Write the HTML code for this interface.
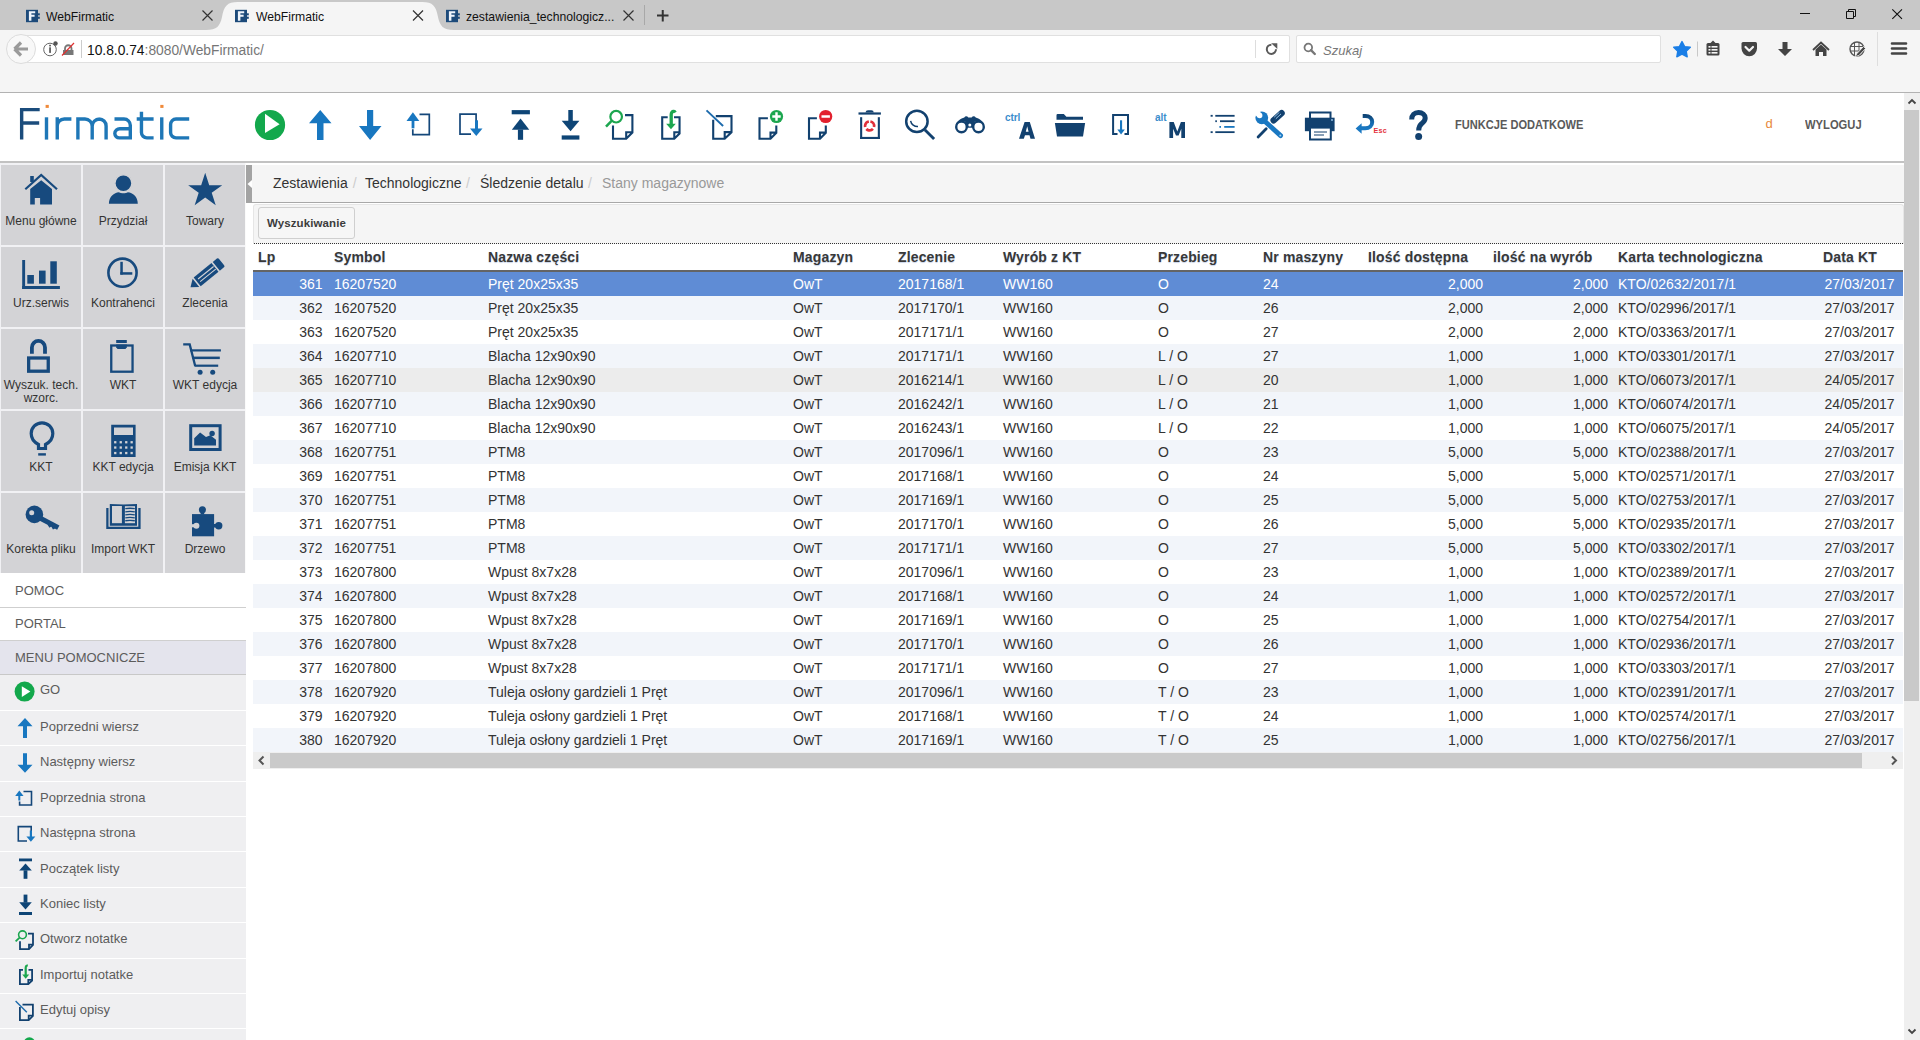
<!DOCTYPE html>
<html><head><meta charset="utf-8"><title>WebFirmatic</title>
<style>
*{box-sizing:border-box}
html,body{margin:0;padding:0;width:1920px;height:1040px;overflow:hidden;background:#fff;font-family:"Liberation Sans",sans-serif}
.a{position:absolute}
svg.i{position:absolute;overflow:visible}
#tabbar{left:0;top:0;width:1920px;height:30px;background:#c8c8c8}
#toolbar{left:0;top:30px;width:1920px;height:62px;background:#f5f5f5}
#tbline{left:0;top:92px;width:1920px;height:1px;background:#b2b2b2}
.tabt{position:absolute;font-size:13px;color:#111;top:8.5px;white-space:nowrap;line-height:16px}
#hdrline{left:0;top:161px;width:1904px;height:2px;background:#c2c2c2}
#side{left:0;top:163px;width:246px;height:877px;background:#efeff1}
.tile{position:absolute;width:80px;height:80px;background:#d3d3d6;text-align:center;font-size:12px;color:#333;line-height:13px}
.tile span{position:absolute;left:-5px;right:-5px;top:50px}
.mi{position:absolute;left:0;width:246px;background:#efeff1;font-size:13px;color:#555;line-height:15px}
.mi span{position:absolute;left:40px;top:9px;white-space:nowrap}
.th{position:absolute;top:249px;font-size:14px;font-weight:bold;color:#383838;line-height:16px;white-space:nowrap;text-shadow:0 1px 1px #c8d4ea;letter-spacing:0.15px}
.row{position:absolute;left:253px;width:1650px;height:24px;font-size:14px;color:#333;background:#fff;line-height:16px}
.row span{position:absolute;top:4px;white-space:nowrap}
.row.alt{background:#f2f5fa}
.row.hov{background:#ececec}
.row.sel{background:#5f8cd5;color:#fff}

</style></head><body>
<div class="a" id="tabbar"></div>
<!-- active tab shape -->
<svg class="i" style="left:0;top:0" width="1920" height="30">
<path d="M206 30 C217 30 220 26 222 17 C224 6 227 2 238 2 L422 2 C433 2 436 6 438 17 C440 26 443 30 454 30 Z" fill="#f5f5f5"/>
</svg>
<!-- favicons -->
<svg class="i" style="left:26px;top:9px" width="15" height="15"><rect x="0" y="0.8" width="12" height="12.4" fill="#1c4a7a"/><rect x="12" y="4.3" width="1.8" height="2" fill="#1c4a7a"/><rect x="12" y="7.7" width="1.8" height="2.1" fill="#1c4a7a"/><path d="M2.9 2.25 H9.2 V4.2 H5.4 V5.7 H8.6 V7.7 H5.4 V11.8 H2.9 Z" fill="#eef4fb"/></svg>
<svg class="i" style="left:235px;top:9px" width="15" height="15"><rect x="0" y="0.8" width="12" height="12.4" fill="#1c4a7a"/><rect x="12" y="4.3" width="1.8" height="2" fill="#1c4a7a"/><rect x="12" y="7.7" width="1.8" height="2.1" fill="#1c4a7a"/><path d="M2.9 2.25 H9.2 V4.2 H5.4 V5.7 H8.6 V7.7 H5.4 V11.8 H2.9 Z" fill="#eef4fb"/></svg>
<svg class="i" style="left:446px;top:9px" width="15" height="15"><rect x="0" y="0.8" width="12" height="12.4" fill="#1c4a7a"/><rect x="12" y="4.3" width="1.8" height="2" fill="#1c4a7a"/><rect x="12" y="7.7" width="1.8" height="2.1" fill="#1c4a7a"/><path d="M2.9 2.25 H9.2 V4.2 H5.4 V5.7 H8.6 V7.7 H5.4 V11.8 H2.9 Z" fill="#eef4fb"/></svg>
<div class="tabt" style="left:46px;font-size:12.2px">WebFirmatic</div>
<div class="tabt" style="left:256px;font-size:12.2px">WebFirmatic</div>
<div class="tabt" style="left:466px;font-size:12.2px">zestawienia_technologicz...</div>
<!-- tab close X -->
<svg class="i" style="left:0;top:0" width="1920" height="30">
<g stroke="#333" stroke-width="1.2" fill="none">
<path d="M202.5 10.5 L212.5 20.5 M212.5 10.5 L202.5 20.5"/>
<path d="M413 10.5 L423 20.5 M423 10.5 L413 20.5"/>
<path d="M623.5 10.5 L633.5 20.5 M633.5 10.5 L623.5 20.5"/>
</g>
<path d="M644.5 5 V25" stroke="#a8a8a8" stroke-width="1"/>
<path d="M657 15.5 H668.5 M662.75 10 V21.5" stroke="#333" stroke-width="2"/>
<!-- window controls -->
<path d="M1800 13.5 H1810" stroke="#111" stroke-width="1"/>
<path d="M1846.5 11.5 H1853.5 V18.5 H1846.5 Z M1848.5 11.5 V9.5 H1855.5 V16.5 H1853.5" stroke="#111" stroke-width="1" fill="none"/>
<path d="M1892.3 9.3 L1902 18.9 M1902 9.3 L1892.3 18.9" stroke="#111" stroke-width="1.1"/>
</svg>

<div class="a" id="toolbar"></div>
<!-- url bar -->
<div class="a" style="left:22px;top:35px;width:1268px;height:28px;background:#fff;border:1px solid #e0e0e0;border-radius:2px"></div>
<div class="a" style="left:6px;top:34px;width:30px;height:30px;border-radius:50%;background:#f8f8f8;border:1px solid #dcdcdc"></div>
<svg class="i" style="left:0;top:29px" width="1920" height="63">
<!-- back arrow -->
<path d="M14.5 20 L21 13.5 M14.5 20 L21 26.5 M15 20 H28" stroke="#9a9a9a" stroke-width="3.2" fill="none" stroke-linejoin="miter"/>
<!-- info icon -->
<circle cx="50" cy="20.5" r="6.3" fill="none" stroke="#666" stroke-width="1"/>
<rect x="49.2" y="18.3" width="1.7" height="5.6" fill="#555"/><rect x="49.2" y="15.8" width="1.7" height="1.6" fill="#555"/>
<circle cx="55.5" cy="14.5" r="2.2" fill="#555"/>
<!-- lock with slash -->
<path d="M63 26 V21 H73.5 V26 Z" fill="#777"/>
<path d="M65 21 V19.5 A3.2 3.2 0 0 1 71.5 19.5 V21" fill="none" stroke="#777" stroke-width="1.8"/>
<path d="M62 26.5 L74 14" stroke="#e03030" stroke-width="1.2"/>
<path d="M81.5 11 V29" stroke="#ccc" stroke-width="1"/>
<!-- reload -->
<path d="M1255.5 11 V29" stroke="#ddd" stroke-width="1"/>
<path d="M1271.4 15.7 A4.6 4.6 0 1 0 1276 20.3" fill="none" stroke="#5a5a5a" stroke-width="2"/>
<path d="M1271.2 14.3 H1277.3 V20.1 Z" fill="#5a5a5a"/>
</svg>
<div class="a" style="left:87px;top:42.5px;font-size:13.8px;line-height:16px;color:#111;white-space:nowrap">10.8.0.74<span style="color:#767676">:8080/WebFirmatic/</span></div>
<!-- search -->
<div class="a" style="left:1296px;top:35px;width:365px;height:28px;background:#fff;border:1px solid #e0e0e0;border-radius:2px"></div>
<svg class="i" style="left:1300px;top:40px" width="20" height="20"><circle cx="8.3" cy="7.5" r="3.8" fill="none" stroke="#777" stroke-width="1.8"/><path d="M11 10.2 L14.8 14" stroke="#777" stroke-width="2.4" stroke-linecap="round"/></svg>
<div class="a" style="left:1323px;top:42.5px;font-size:13px;line-height:16px;color:#777;font-style:italic">Szukaj</div>
<svg class="i" style="left:0;top:29px" width="1920" height="63">
<!-- star -->
<path d="M1682 12.5 L1684.6 17.6 L1690.3 18.3 L1686.2 22.2 L1687.2 27.8 L1682 25.1 L1676.8 27.8 L1677.8 22.2 L1673.7 18.3 L1679.4 17.6 Z" fill="#1a7ee6" stroke="#1a7ee6" stroke-width="1.4" stroke-linejoin="round"/>
<path d="M1697.5 12.5 V27.5" stroke="#c8c8c8" stroke-width="1"/>
<!-- reading list -->
<rect x="1706.5" y="14" width="13" height="12.5" rx="1.5" fill="#444"/>
<path d="M1710.5 14 L1713 11.5 L1715.5 14 Z" fill="#444"/>
<rect x="1708.5" y="17" width="2" height="1.6" fill="#f5f5f5"/><rect x="1711.5" y="17" width="6" height="1.6" fill="#f5f5f5"/>
<rect x="1708.5" y="20" width="2" height="1.6" fill="#f5f5f5"/><rect x="1711.5" y="20" width="6" height="1.6" fill="#f5f5f5"/>
<rect x="1708.5" y="23" width="2" height="1.6" fill="#f5f5f5"/><rect x="1711.5" y="23" width="6" height="1.6" fill="#f5f5f5"/>
<!-- pocket -->
<path d="M1741.5 14.5 Q1741.5 13 1743 13 H1755.5 Q1757 13 1757 14.5 V19.5 A7.75 7.75 0 0 1 1741.5 19.5 Z" fill="#444"/>
<path d="M1745.5 18 L1749.25 21.7 L1753 18" stroke="#f5f5f5" stroke-width="2.2" fill="none" stroke-linecap="round" stroke-linejoin="round"/>
<!-- download -->
<path d="M1782.5 13 H1787.5 V20 H1792 L1785 27 L1778 20 H1782.5 Z" fill="#444"/>
<!-- home -->
<path d="M1813 21 L1821 13.5 L1829 21" stroke="#444" stroke-width="1.8" fill="none"/>
<path d="M1815.5 20.5 L1821 15.5 L1826.5 20.5 V27 H1823 V23 H1819 V27 H1815.5 Z" fill="#444"/>
<!-- globe pencil -->
<circle cx="1857" cy="20" r="7" fill="none" stroke="#555" stroke-width="1.4"/>
<path d="M1850.5 17.5 H1863.5 M1850.5 22 H1860 M1854.5 13.5 V26.5 M1859 13.5 V22" stroke="#555" stroke-width="1"/>
<path d="M1855 27.5 L1857 24.5 L1863.5 17.5 L1865.5 19.5 L1859 26.5 Z" fill="#444" stroke="#f5f5f5" stroke-width="0.8"/>
<path d="M1877.5 3 V37" stroke="#dedede" stroke-width="1"/>
<!-- hamburger -->
<path d="M1892 14.5 H1906 M1892 19.5 H1906 M1892 24.5 H1906" stroke="#444" stroke-width="2.6" stroke-linecap="round"/>
</svg>
<div class="a" id="tbline"></div>
<div class="a" id="hdrline"></div>
<svg class="i" style="left:0;top:0;pointer-events:none" width="1920" height="170">
<!-- LOGO -->
<g fill="none" stroke-linecap="butt" stroke-width="3.4">
<path d="M21.65 139.6 V109.6 H39.7 M21.65 123 H39.2" stroke="#1b4c7c"/>
<g stroke="#1e77b7">
<path d="M46.5 117.3 V139.6"/>
<path d="M57.25 117.3 V139.6 M57.25 126 A7 7 0 0 1 64.25 119 H71.4"/>
<path d="M77.9 117.3 V139.6 M77.9 119 H85 A7.2 7.2 0 0 1 92.2 126.2 V139.6 M92.2 126.2 A7.2 7.2 0 0 1 99.4 119 H99.1 A6.9 6.9 0 0 1 106.1 126 V139.6"/>
<path d="M114.5 119 H124 A6.3 6.3 0 0 1 130.3 125.3 V139.6 M130.3 128.7 H120 A5 5 0 0 0 114.8 133.5 A4.5 4.5 0 0 0 119.5 137.9 H130.3"/>
<path d="M141.45 111.8 V132.5 A5.4 5.4 0 0 0 146.85 137.9 H153.6 M136.7 119 H153.6"/>
<path d="M161.75 117.3 V139.6"/>
<path d="M189.2 119 H176 A5.4 5.4 0 0 0 170.6 124.4 V132.5 A5.4 5.4 0 0 0 176 137.9 H189.2"/>
</g>
</g>
<rect x="45.6" y="104.9" width="3.2" height="3" fill="#f08a3a"/>
<rect x="160.3" y="104.9" width="3.2" height="3" fill="#f08a3a"/>

<!-- 1 GO -->
<circle cx="270" cy="125" r="15.1" fill="#13a84c"/>
<path d="M265 113.8 L279.6 124.2 L265 132.9 Z" fill="#fff"/>
<!-- 2 up -->
<path d="M320.25 110 L331.5 123.2 H323.5 V140 H317 V123.2 H309 Z" fill="#1877c0"/>
<!-- 3 down -->
<path d="M367 110 H373.2 V126 H381.5 L370.1 140 L359 126 H367 Z" fill="#1877c0"/>
<!-- 4 prev page -->
<path d="M419.5 114.3 H429.3 V134.7 H412.8 V129.3" fill="none" stroke="#14477a" stroke-width="1.7"/>
<path d="M412.9 112.3 L419.3 120.9 H406.5 Z" fill="#1877c0"/><rect x="411.6" y="120.5" width="2.8" height="7.8" fill="#1877c0"/>
<!-- 5 next page -->
<path d="M476.1 127.5 V114.1 H460 V134.1 H471" fill="none" stroke="#14477a" stroke-width="1.7"/>
<rect x="475" y="120.3" width="3" height="8.8" fill="#1877c0"/><path d="M470 128.6 H482.5 L476.25 135.9 Z" fill="#1877c0"/>
<!-- 6 top of list -->
<g fill="#0e4576">
<rect x="511.7" y="110.1" width="18.2" height="4.2"/>
<path d="M520.55 118.6 L529.3 129.8 H511.8 Z"/><rect x="517.9" y="129.5" width="5.2" height="10.3"/>
<!-- 7 end of list -->
<rect x="568.3" y="110" width="4.5" height="11"/><path d="M561.7 120.8 H579.4 L570.55 131.3 Z"/><rect x="561.7" y="135.4" width="17.7" height="4.2"/>
</g>
<!-- page icons -->
<g fill="none" stroke="#12416f" stroke-width="2.1">
<path d="M613 125.4 V138.75 H626.2 L632.4 132.5 V115.1 H625 M626.2 138.5 V132.3 H632"/>
<path d="M667.7 117.2 H662.2 V138.75 H674.3 L679.55 133.5 V117.2 H674 M674.3 138.5 V132.3 H679.3"/>
<path d="M713.2 119.8 V138.75 H724.7 L731.5 132.2 V116.1 H715.8 M724.7 138.5 V132.1 H731.3"/>
<path d="M767.9 118.2 H759.5 V138.75 H770.5 L776.3 132.8 V125.5 M770.5 138.5 V132.6 H776.1"/>
<path d="M816.9 118.2 H809 V138.75 H820 L825.8 132.8 V125.5 M820 138.5 V132.6 H825.6"/>
</g>
<!-- magnifier green on page 8 -->
<circle cx="616.15" cy="116.7" r="5.8" fill="none" stroke="#1ca64f" stroke-width="2.2"/>
<path d="M611.6 120.8 L606 126.6" stroke="#1ca64f" stroke-width="2.5"/>
<!-- import arrow green -->
<path d="M671.2 124.5 V114.8 C671.2 112.5 672.3 111.2 673.8 111.4 C674.6 111.5 675 112 675.3 112.5" fill="none" stroke="#1ca64f" stroke-width="3.3"/>
<path d="M666.15 123.85 H675.8 L671 129.2 Z" fill="#1ca64f"/>
<!-- edit line -->
<path d="M706.5 110.4 L723.1 126" stroke="#1c6aac" stroke-width="1.9"/>
<!-- add -->
<circle cx="776.5" cy="116.5" r="6.6" fill="#1ca64f"/>
<path d="M772.3 116.5 H780.7 M776.5 112.3 V120.7" stroke="#fff" stroke-width="2.4"/>
<!-- remove -->
<circle cx="825.7" cy="116.5" r="6.6" fill="#e2212e"/>
<path d="M821.5 116.5 H829.9" stroke="#fff" stroke-width="2.5"/>
<!-- 13 trash -->
<g fill="#12416f">
<rect x="858.5" y="112.4" width="22.4" height="2.2"/>
<path d="M865.5 112.5 Q865.8 110.3 868 110.3 H871.4 Q873.6 110.3 873.8 112.5 Z"/>
<rect x="860.1" y="117.2" width="2.1" height="21.8"/>
<rect x="877.8" y="117.2" width="2.1" height="21.8"/>
<rect x="860.1" y="136.9" width="19.8" height="2.1"/>
</g>
<circle cx="869.6" cy="125.9" r="4.5" fill="none" stroke="#e0303a" stroke-width="2.7" stroke-dasharray="7.2 2.2" transform="rotate(-80 869.6 125.9)"/>
<!-- 14 magnifier -->
<circle cx="916.9" cy="121.4" r="10.7" fill="none" stroke="#12416f" stroke-width="2.5"/>
<path d="M910.6 120.8 A7 7 0 0 0 918 126.6" fill="none" stroke="#12416f" stroke-width="1.5"/>
<path d="M924.8 129.8 L934.1 139" stroke="#12416f" stroke-width="2.9"/>
<!-- 15 binoculars -->
<circle cx="961.5" cy="126.9" r="5.3" fill="none" stroke="#12416f" stroke-width="2.4"/>
<circle cx="978.5" cy="126.9" r="5.3" fill="none" stroke="#12416f" stroke-width="2.4"/>
<path d="M955.6 125.5 C956.5 121 961 118.5 964.3 117.4 C965.2 116 967.3 116 968.3 117.4 H971.6 C972.6 116 974.8 116 975.7 117.4 C979 118.5 983.5 121 984.4 125.5 L980 121.8 H960 Z" fill="#12416f"/>
<path d="M965 120 H975 L973.5 127.7 H966.5 Z" fill="#12416f"/>
<circle cx="969.8" cy="125" r="1.5" fill="#fff"/>
</svg>
<div class="a" style="left:1005px;top:113px;font-size:10px;font-weight:bold;color:#3a8dcc;line-height:10px;letter-spacing:-0.1px">ctrl</div>
<svg class="i" style="left:0;top:0" width="1920" height="170"><path d="M1019 138.8 L1024.6 121.9 H1029.8 L1035 138.8 H1030.5 L1029.5 135.3 H1025 L1023.8 138.8 Z M1025.8 131.8 H1028.6 L1027.2 126.3 Z" fill="#12416f" fill-rule="evenodd"/></svg>
<div class="a" style="left:1155px;top:113px;font-size:10px;font-weight:bold;color:#3a8dcc;line-height:10px;letter-spacing:-0.1px">alt</div>
<svg class="i" style="left:0;top:0" width="1920" height="170"><path d="M1169.4 137.9 V121.9 H1173.7 L1177.3 131.5 L1180.9 121.9 H1185 V137.9 H1181.3 V128.8 L1178.6 135.6 H1176 L1173.1 128.8 V137.9 Z" fill="#12416f"/></svg>
<svg class="i" style="left:0;top:0;pointer-events:none" width="1920" height="170">
<!-- 17 folder -->
<path d="M1056.5 119.8 V115.2 Q1056.5 114.1 1057.6 114.1 H1063.8 L1066.4 116.7 H1083 V119.8 Z" fill="#12416f"/>
<path d="M1054.9 122.9 H1085.1 L1083 136.5 H1057 Z" fill="#12416f"/>
<!-- 18 download -->
<path d="M1117.5 134 H1113.1 V115 H1128 V134 H1124.5" fill="none" stroke="#12416f" stroke-width="2"/>
<rect x="1120" y="120.3" width="2.1" height="9.7" fill="#1877c0"/>
<path d="M1117.3 129.6 H1124.8 L1121.05 134.6 Z" fill="#1877c0"/>
<!-- 20 list -->
<g fill="#12416f">
<rect x="1210.6" y="114.9" width="2.1" height="1.8"/><rect x="1215.3" y="114.9" width="19.3" height="1.8"/>
<rect x="1215.3" y="120.3" width="1.6" height="1.8"/><rect x="1220" y="120.3" width="14.6" height="1.8"/>
<rect x="1210.6" y="131.25" width="2.1" height="1.8"/><rect x="1215.3" y="131.25" width="19.3" height="1.8"/>
</g>
<g fill="#1877c0"><rect x="1219.4" y="126" width="1.6" height="1.8"/><rect x="1224.2" y="126" width="10.4" height="1.8"/></g>
<!-- 21 tools -->
<path d="M1273.6 120.4 L1281.6 113.2" stroke="#12416f" stroke-width="6.3" stroke-linecap="round"/>
<path d="M1266.2 128.8 L1258.1 137" stroke="#12416f" stroke-width="2.8" stroke-linecap="round"/>
<path d="M1274.2 117.2 L1279.4 112.3 M1275.8 118.8 L1281 113.9" stroke="#a9d2f2" stroke-width="0.9"/>
<path d="M1265 121.5 L1280.6 135.6" stroke="#1a78c2" stroke-width="4.8" stroke-linecap="round"/>
<circle cx="1261.8" cy="117.8" r="6.4" fill="#1a78c2"/>
<circle cx="1259.7" cy="115.5" r="2.7" fill="#fff"/>
<rect x="-2.7" y="-10" width="5.4" height="10" transform="translate(1259.7 115.5) rotate(-45)" fill="#fff"/>
<circle cx="1280.3" cy="135.4" r="1" fill="#9fd0f5"/>
<!-- 22 printer -->
<rect x="1310" y="112.5" width="20.5" height="6.5" fill="none" stroke="#12416f" stroke-width="2"/>
<rect x="1304.9" y="117.7" width="29.7" height="13.5" fill="#12416f"/>
<circle cx="1332" cy="120" r="0.9" fill="#9cc8ee"/>
<rect x="1309.9" y="127.4" width="21" height="12.2" fill="#fff"/>
<rect x="1310" y="127.6" width="20.8" height="11.9" fill="none" stroke="#12416f" stroke-width="2"/>
<path d="M1314 132 H1327 M1314 135 H1324" stroke="#12416f" stroke-width="1.1"/>
<!-- 23 esc back -->
<defs><linearGradient id="eg" x1="0" y1="0" x2="0" y2="1"><stop offset="0" stop-color="#0f4576"/><stop offset="0.45" stop-color="#1466a8"/><stop offset="1" stop-color="#1a78c2"/></linearGradient></defs>
<path d="M1362.7 116 H1365.5 C1369.5 116 1372.2 118.6 1372.2 122 C1372.2 125.6 1369.3 128.3 1365.3 128.3 H1360.5" fill="none" stroke="url(#eg)" stroke-width="4" gradientUnits="userSpaceOnUse"/>
<path d="M1355.6 128.5 L1361.6 123.3 V133.8 Z" fill="#1a78c2"/>
<!-- 24 question -->
<path d="M1411.7 119.4 C1411.7 115 1414.5 112.5 1418.5 112.5 C1422.5 112.5 1425.2 114.8 1425.2 118 C1425.2 121 1423.3 122.4 1421.5 123.8 C1419.8 125.2 1418.7 126.5 1418.7 130.6" fill="none" stroke="#12416f" stroke-width="5"/>
<circle cx="1418.65" cy="136.5" r="3.5" fill="#12416f"/>
</svg>
<div class="a" style="left:1373.5px;top:127px;font-size:7.2px;font-weight:bold;color:#e3323c;line-height:8px;letter-spacing:0.2px">Esc</div>
<div class="a" style="left:1455px;top:117px;font-size:13.2px;font-weight:bold;color:#5a5a5a;line-height:16px;white-space:nowrap;transform:scaleX(0.84);transform-origin:0 0">FUNKCJE DODATKOWE</div>
<div class="a" style="left:1765.5px;top:116px;font-size:13px;color:#e8893a;line-height:16px">d</div>
<div class="a" style="left:1805px;top:116.5px;font-size:13.2px;font-weight:bold;color:#5a5a5a;line-height:16px;white-space:nowrap;transform:scaleX(0.85);transform-origin:0 0">WYLOGUJ</div>
<div class="a" id="side"></div>
<div class="a" style="left:0;top:163px;width:246px;height:410px;background:#f1f1f4"></div>
<div class="tile" style="left:1px;top:165px"><span>Menu główne</span></div>
<div class="tile" style="left:83px;top:165px"><span>Przydział</span></div>
<div class="tile" style="left:165px;top:165px"><span>Towary</span></div>
<div class="tile" style="left:1px;top:247px"><span>Urz.serwis</span></div>
<div class="tile" style="left:83px;top:247px"><span>Kontrahenci</span></div>
<div class="tile" style="left:165px;top:247px"><span>Zlecenia</span></div>
<div class="tile" style="left:1px;top:329px"><span>Wyszuk. tech.<br>wzorc.</span></div>
<div class="tile" style="left:83px;top:329px"><span>WKT</span></div>
<div class="tile" style="left:165px;top:329px"><span>WKT edycja</span></div>
<div class="tile" style="left:1px;top:411px"><span>KKT</span></div>
<div class="tile" style="left:83px;top:411px"><span>KKT edycja</span></div>
<div class="tile" style="left:165px;top:411px"><span>Emisja KKT</span></div>
<div class="tile" style="left:1px;top:493px"><span>Korekta pliku</span></div>
<div class="tile" style="left:83px;top:493px"><span>Import WKT</span></div>
<div class="tile" style="left:165px;top:493px"><span>Drzewo</span></div>
<div class="a" style="left:245px;top:163px;width:1px;height:410px;background:#fafafa"></div>
<div class="a" style="left:0;top:573px;width:246px;height:35px;background:#fff;border-bottom:1px solid #cfcfcf"></div>
<div class="a" style="left:0;top:608px;width:246px;height:33px;background:#fff;border-bottom:1px solid #cfcfcf"></div>
<div class="a" style="left:0;top:641px;width:246px;height:34px;background:#e4e4ed;border-bottom:1px solid #c8c8c8"></div>
<div class="a" style="left:15px;top:583px;font-size:13px;line-height:15px;color:#5c5c5c;white-space:nowrap">POMOC</div>
<div class="a" style="left:15px;top:616px;font-size:13px;line-height:15px;color:#5c5c5c;white-space:nowrap">PORTAL</div>
<div class="a" style="left:15px;top:650px;font-size:13px;line-height:15px;color:#5c5c5c;white-space:nowrap">MENU POMOCNICZE</div>
<div class="a" style="left:40px;top:682.10px;font-size:13px;line-height:15px;color:#5c5c5c;white-space:nowrap">GO</div>
<div class="a" style="left:0;top:709.70px;width:246px;height:1px;background:#fff"></div>
<div class="a" style="left:40px;top:718.90px;font-size:13px;line-height:15px;color:#5c5c5c;white-space:nowrap">Poprzedni wiersz</div>
<div class="a" style="left:0;top:745.10px;width:246px;height:1px;background:#fff"></div>
<div class="a" style="left:40px;top:754.30px;font-size:13px;line-height:15px;color:#5c5c5c;white-space:nowrap">Następny wiersz</div>
<div class="a" style="left:0;top:780.50px;width:246px;height:1px;background:#fff"></div>
<div class="a" style="left:40px;top:789.70px;font-size:13px;line-height:15px;color:#5c5c5c;white-space:nowrap">Poprzednia strona</div>
<div class="a" style="left:0;top:815.90px;width:246px;height:1px;background:#fff"></div>
<div class="a" style="left:40px;top:825.10px;font-size:13px;line-height:15px;color:#5c5c5c;white-space:nowrap">Następna strona</div>
<div class="a" style="left:0;top:851.30px;width:246px;height:1px;background:#fff"></div>
<div class="a" style="left:40px;top:860.50px;font-size:13px;line-height:15px;color:#5c5c5c;white-space:nowrap">Początek listy</div>
<div class="a" style="left:0;top:886.70px;width:246px;height:1px;background:#fff"></div>
<div class="a" style="left:40px;top:895.90px;font-size:13px;line-height:15px;color:#5c5c5c;white-space:nowrap">Koniec listy</div>
<div class="a" style="left:0;top:922.10px;width:246px;height:1px;background:#fff"></div>
<div class="a" style="left:40px;top:931.30px;font-size:13px;line-height:15px;color:#5c5c5c;white-space:nowrap">Otworz notatke</div>
<div class="a" style="left:0;top:957.50px;width:246px;height:1px;background:#fff"></div>
<div class="a" style="left:40px;top:966.70px;font-size:13px;line-height:15px;color:#5c5c5c;white-space:nowrap">Importuj notatke</div>
<div class="a" style="left:0;top:992.90px;width:246px;height:1px;background:#fff"></div>
<div class="a" style="left:40px;top:1002.10px;font-size:13px;line-height:15px;color:#5c5c5c;white-space:nowrap">Edytuj opisy</div>
<div class="a" style="left:0;top:1028.30px;width:246px;height:1px;background:#fff"></div>
<div class="a" style="left:40px;top:1037.50px;font-size:13px;line-height:15px;color:#5c5c5c;white-space:nowrap">Dodaj notatke</div>
<svg class="i" style="left:0;top:0;pointer-events:none" width="250" height="1040">
<g fill="#174a7e">
<!-- home -->
<rect x="30.2" y="176" width="3.6" height="6"/>
<path d="M25.3 189.2 L41.2 175 L57 189.2" fill="none" stroke="#174a7e" stroke-width="2.2"/>
<path d="M30.2 189 L41.2 180.2 L52 189 V204.4 H40.1 V198 H34.8 V204.4 H30.2 Z"/>
<!-- person -->
<circle cx="123.4" cy="183.3" r="8.5" stroke="#d3d3d6" stroke-width="1.4"/>
<path d="M108.9 203.8 C109 196.5 114 192.6 119 192.2 C121 193.6 125.8 193.6 127.8 192.2 C132.8 192.6 137.8 196.5 137.8 203.8 Z"/>
<!-- star -->
<path d="M205.20 172.80 L209.22 185.17 L222.22 185.17 L211.70 192.81 L215.72 205.18 L205.20 197.54 L194.68 205.18 L198.70 192.81 L188.18 185.17 L201.18 185.17 Z"/>
<!-- bars -->
<rect x="22.2" y="260" width="2.9" height="29"/><rect x="22.2" y="286" width="37.7" height="3"/>
<rect x="27.3" y="275" width="6.6" height="8.7"/><rect x="39" y="270.6" width="6.6" height="13.1"/><rect x="50.3" y="261.3" width="6.5" height="22.4"/>
<!-- clock -->
<circle cx="122.5" cy="272.7" r="14.1" fill="none" stroke="#174a7e" stroke-width="2.6"/>
<rect x="120.3" y="261.8" width="2.5" height="12.8"/><rect x="120.3" y="272.2" width="12" height="2.5"/>
<!-- pencil -->
<g transform="translate(190.5 287.2) rotate(-39)">
<path d="M0 0 L7 -5.3 V5.3 Z"/>
<path d="M8.6 -5.6 H31.5 V5.6 H8.6 Z"/>
<path d="M11 -1.6 H31 M11 1.8 H31" stroke="#d3d3d6" stroke-width="1.1"/>
<path d="M33.2 -5.6 H38.5 Q40 -5.6 40 -4 V4 Q40 5.6 38.5 5.6 H33.2 Z"/>
</g>
<!-- lock -->
<rect x="28.65" y="358" width="19.6" height="13.2" fill="none" stroke="#174a7e" stroke-width="3.3"/>
<path d="M31.9 353.7 V347.5 A6.5 6.5 0 0 1 45 347.5 V353.7" fill="none" stroke="#174a7e" stroke-width="3.8"/>
<!-- clipboard -->
<rect x="111.25" y="345.5" width="21.3" height="26.2" fill="none" stroke="#174a7e" stroke-width="2.3"/>
<rect x="116.2" y="340" width="10.6" height="3"/>
<path d="M116.2 344.5 H126.8 V347.3 L125.5 349 H117.5 L116.2 347.3 Z"/>
<!-- cart -->
<path d="M183.2 344.4 H189.7 L195.2 366" fill="none" stroke="#174a7e" stroke-width="2.3"/>
<rect x="190.3" y="349.3" width="30.6" height="2.2"/><rect x="192.4" y="356.6" width="27.4" height="2.5"/><rect x="194.6" y="364.6" width="23.6" height="2.2"/>
<circle cx="200.1" cy="372.3" r="2.5"/><circle cx="212.7" cy="372.3" r="2.5"/>
<!-- bulb -->
<path d="M38.5 448.5 V444.5 C35.5 443 31.2 439.5 31.2 433.6 A10.8 10.8 0 0 1 52.8 433.6 C52.8 439.5 48.5 443 45.5 444.5 V448.5 Z" fill="none" stroke="#174a7e" stroke-width="3.2"/>
<rect x="38.2" y="453.2" width="7.7" height="2.4"/>
<!-- calculator -->
<path d="M111.2 424.75 H135.6 V457 H111.2 Z M114 427.5 V435.1 H133 V427.5 Z" fill-rule="evenodd"/>
<rect x="114.1" y="441.1" width="2.3" height="2.3" fill="#d3d3d6"/>
<rect x="119.6" y="441.1" width="2.3" height="2.3" fill="#d3d3d6"/>
<rect x="125.1" y="441.1" width="2.3" height="2.3" fill="#d3d3d6"/>
<rect x="130.5" y="441.1" width="2.3" height="2.3" fill="#d3d3d6"/>
<rect x="114.1" y="446.4" width="2.3" height="2.3" fill="#d3d3d6"/>
<rect x="119.6" y="446.4" width="2.3" height="2.3" fill="#d3d3d6"/>
<rect x="125.1" y="446.4" width="2.3" height="2.3" fill="#d3d3d6"/>
<rect x="130.5" y="446.4" width="2.3" height="2.3" fill="#d3d3d6"/>
<rect x="114.1" y="451.9" width="2.3" height="2.3" fill="#d3d3d6"/>
<rect x="119.6" y="451.9" width="2.3" height="2.3" fill="#d3d3d6"/>
<rect x="125.1" y="451.9" width="2.3" height="2.3" fill="#d3d3d6"/>
<rect x="130.5" y="451.9" width="2.3" height="2.3" fill="#d3d3d6"/>
<!-- picture -->
<rect x="190.7" y="425.7" width="29.4" height="23.8" fill="none" stroke="#174a7e" stroke-width="3"/>
<path d="M194.2 445.6 V438.2 L200.1 432.5 L206 437.1 L210.3 435.2 L216 439.7 V445.6 Z"/>
<circle cx="212.1" cy="433.5" r="2.7"/>
<!-- key -->
<circle cx="34.4" cy="514.4" r="8.8"/>
<circle cx="31.7" cy="512.8" r="2.5" fill="#d3d3d6"/>
<path d="M38 517 L58.3 527.6" stroke="#174a7e" stroke-width="5"/>
<path d="M48.5 524 L50.5 527 M52.3 526 L54 529" stroke="#174a7e" stroke-width="2.4"/>
<!-- book -->
<path d="M106.25 508 H108.5 V526.8 H138.3 V508 H140.6 V529.1 H106.25 Z"/>
<path d="M109.8 503.9 L123.4 504.6 L137 503.9 V525.8 H109.8 Z"/>
<rect x="112" y="506" width="9.9" height="17.2" fill="#d3d3d6"/>
<rect x="124.9" y="506.2" width="10.1" height="17" fill="#d3d3d6"/>
<path d="M125.3 508.7 Q130 507.8 134.8 508.7 M125.3 511.9 Q130 511 134.8 511.9 M125.3 514.9 Q130 514 134.8 514.9 M125.3 517.8 Q130 516.9 134.8 517.8 M125.3 520.75 Q130 519.9 134.8 520.75" fill="none" stroke="#174a7e" stroke-width="1.3"/>
<!-- puzzle -->
<rect x="192" y="514.1" width="22.1" height="22.2"/>
<circle cx="196.4" cy="525.75" r="3" fill="#d3d3d6"/><rect x="191.5" y="524.2" width="4.5" height="3.1" fill="#d3d3d6"/>
<circle cx="218.7" cy="525.75" r="3.7"/><rect x="213" y="524" width="3.5" height="3.5"/>
<circle cx="202.4" cy="509.7" r="3.5"/><rect x="200.6" y="511" width="3.6" height="3.5"/>
</g>
<!-- menu icons -->
<circle cx="24.6" cy="691.6" r="10" fill="#13a84c"/>
<path d="M21.8 686.3 L30.4 691.6 L21.8 696.9 Z" fill="#fff"/>
<path d="M25 717.9 L32.5 726.3 H27 V738 H23 V726.3 H17.5 Z" fill="#1877c0"/>
<path d="M23 753.2 H27 V764.8 H32.5 L25 772.7 L17.5 764.8 H23 Z" fill="#1877c0"/>
<path d="M23.5 791.5 H31.5 V805 H19.6 V801.6" fill="none" stroke="#14477a" stroke-width="1.6"/>
<path d="M19.3 790.6 L23.5 796 H15.2 Z" fill="#1877c0"/><rect x="18.3" y="795.5" width="2" height="5" fill="#1877c0"/>
<path d="M31.2 833.5 V826.6 H18.3 V841 H27" fill="none" stroke="#14477a" stroke-width="1.6"/>
<rect x="29.8" y="830.5" width="2.2" height="6.5" fill="#1877c0"/><path d="M26.4 836.5 H35.3 L30.9 841.8 Z" fill="#1877c0"/>
<g fill="#0e4576">
<rect x="19" y="858.5" width="13" height="2.8"/><path d="M25.5 863.5 L31.8 870.5 H19.2 Z"/><rect x="23.6" y="870.3" width="3.8" height="8.5"/>
<rect x="23.6" y="894.6" width="3.8" height="8"/><path d="M19.2 902.3 H31.8 L25.5 909.4 Z"/><rect x="19" y="912" width="13" height="3"/>
</g>
<g fill="none" stroke="#12416f" stroke-width="1.8">
<path d="M20 941.2 V949.1 H29 L33 945 V933.6 H28"/>
<path d="M29 949 V944.6 H32.8"/>
<path d="M28.5 969.8 H32.1 V980.5 L28.3 984.2 H19.9 V969.8 H23"/>
<path d="M28.3 984 V979.8 H32"/>
<path d="M19.9 1007 V1020.2 H28.7 L32.9 1016 V1004.6 H22.5"/>
<path d="M28.7 1020 V1015.6 H32.7"/>
</g>
<circle cx="22.5" cy="934.8" r="3.9" fill="none" stroke="#1ca64f" stroke-width="1.6"/>
<path d="M19.6 937.6 L15.6 941.4" stroke="#1ca64f" stroke-width="1.8"/>
<path d="M25.7 975.5 V968 C25.7 966.3 26.5 965.3 27.8 965.6" fill="none" stroke="#1ca64f" stroke-width="2.2"/>
<path d="M22.2 974.5 H29.2 L25.7 978.8 Z" fill="#1ca64f"/>
<path d="M15.6 1001 L26.8 1012.3" stroke="#1c6aac" stroke-width="1.4"/>
<circle cx="29.4" cy="1043" r="5.8" fill="#13a84c"/>
</svg>
<div class="a" style="left:246px;top:163px;width:1658px;height:877px;background:#fff"></div>
<!-- toggle bar -->
<div class="a" style="left:246px;top:165px;width:6px;height:38px;background:#a3a3a3"></div>
<svg class="i" style="left:246px;top:165px" width="6" height="38"><path d="M1.5 19 L6 15 L6 23 Z" fill="#fff"/></svg>
<!-- breadcrumb -->
<div class="a" style="left:252px;top:165px;width:1652px;height:38px;background:#f5f5f5;border-bottom:1px solid #a8a8a8"></div>
<div class="a" style="left:273px;top:175px;font-size:14px;line-height:16px;color:#333;white-space:nowrap">Zestawienia</div>
<div class="a" style="left:352.7px;top:175px;font-size:14px;line-height:16px;color:#ccc">/</div>
<div class="a" style="left:365px;top:175px;font-size:14px;line-height:16px;color:#333;white-space:nowrap">Technologiczne</div>
<div class="a" style="left:466px;top:175px;font-size:14px;line-height:16px;color:#ccc">/</div>
<div class="a" style="left:480px;top:175px;font-size:14px;line-height:16px;color:#333;white-space:nowrap">Śledzenie detalu</div>
<div class="a" style="left:588px;top:175px;font-size:14px;line-height:16px;color:#ccc">/</div>
<div class="a" style="left:602px;top:175px;font-size:14px;line-height:16px;color:#999;white-space:nowrap">Stany magazynowe</div>
<!-- search panel -->
<div class="a" style="left:253px;top:204px;width:1651px;height:40px;background:#f5f5f5;border:1px solid #e6e6e6;border-bottom:none;border-radius:3px 3px 0 0"></div>
<div class="a" style="left:258px;top:207px;width:97px;height:32px;background:#f6f6f6;border:1px solid #cfcfcf;border-radius:3px;font-size:11.5px;font-weight:bold;color:#3c3c3c;line-height:14px;text-align:center;padding-top:8px;letter-spacing:0.1px">Wyszukiwanie</div>
<div class="a" style="left:254px;top:243px;width:1649px;height:1px;background-image:linear-gradient(90deg,#333 50%,transparent 50%);background-size:2px 1px"></div>
<!-- table header bg + border -->
<div class="a" style="left:253px;top:244px;width:1650px;height:26px;background:#fff"></div>
<div class="a" style="left:253px;top:270px;width:1650px;height:2px;background:#646464"></div>
<div class="th" style="left:258px">Lp</div><div class="th" style="left:334px">Symbol</div><div class="th" style="left:488px">Nazwa części</div><div class="th" style="left:793px">Magazyn</div><div class="th" style="left:898px">Zlecenie</div><div class="th" style="left:1003px">Wyrób z KT</div><div class="th" style="left:1158px">Przebieg</div><div class="th" style="left:1263px">Nr maszyny</div><div class="th" style="left:1368px">Ilość dostępna</div><div class="th" style="left:1493px">ilość na wyrób</div><div class="th" style="left:1618px">Karta technologiczna</div><div class="th" style="left:1823px">Data KT</div><div class="row sel" style="top:272px"><span style="right:1580.5px">361</span><span style="left:81px">16207520</span><span style="left:235px">Pręt 20x25x35</span><span style="left:540px">OwT</span><span style="left:645px">2017168/1</span><span style="left:750px">WW160</span><span style="left:905px">O</span><span style="left:1010px">24</span><span style="right:420px">2,000</span><span style="right:295px">2,000</span><span style="left:1365px">KTO/02632/2017/1</span><span style="right:8.5px">27/03/2017</span></div>
<div class="row alt" style="top:296px"><span style="right:1580.5px">362</span><span style="left:81px">16207520</span><span style="left:235px">Pręt 20x25x35</span><span style="left:540px">OwT</span><span style="left:645px">2017170/1</span><span style="left:750px">WW160</span><span style="left:905px">O</span><span style="left:1010px">26</span><span style="right:420px">2,000</span><span style="right:295px">2,000</span><span style="left:1365px">KTO/02996/2017/1</span><span style="right:8.5px">27/03/2017</span></div>
<div class="row" style="top:320px"><span style="right:1580.5px">363</span><span style="left:81px">16207520</span><span style="left:235px">Pręt 20x25x35</span><span style="left:540px">OwT</span><span style="left:645px">2017171/1</span><span style="left:750px">WW160</span><span style="left:905px">O</span><span style="left:1010px">27</span><span style="right:420px">2,000</span><span style="right:295px">2,000</span><span style="left:1365px">KTO/03363/2017/1</span><span style="right:8.5px">27/03/2017</span></div>
<div class="row alt" style="top:344px"><span style="right:1580.5px">364</span><span style="left:81px">16207710</span><span style="left:235px">Blacha 12x90x90</span><span style="left:540px">OwT</span><span style="left:645px">2017171/1</span><span style="left:750px">WW160</span><span style="left:905px">L / O</span><span style="left:1010px">27</span><span style="right:420px">1,000</span><span style="right:295px">1,000</span><span style="left:1365px">KTO/03301/2017/1</span><span style="right:8.5px">27/03/2017</span></div>
<div class="row hov" style="top:368px"><span style="right:1580.5px">365</span><span style="left:81px">16207710</span><span style="left:235px">Blacha 12x90x90</span><span style="left:540px">OwT</span><span style="left:645px">2016214/1</span><span style="left:750px">WW160</span><span style="left:905px">L / O</span><span style="left:1010px">20</span><span style="right:420px">1,000</span><span style="right:295px">1,000</span><span style="left:1365px">KTO/06073/2017/1</span><span style="right:8.5px">24/05/2017</span></div>
<div class="row alt" style="top:392px"><span style="right:1580.5px">366</span><span style="left:81px">16207710</span><span style="left:235px">Blacha 12x90x90</span><span style="left:540px">OwT</span><span style="left:645px">2016242/1</span><span style="left:750px">WW160</span><span style="left:905px">L / O</span><span style="left:1010px">21</span><span style="right:420px">1,000</span><span style="right:295px">1,000</span><span style="left:1365px">KTO/06074/2017/1</span><span style="right:8.5px">24/05/2017</span></div>
<div class="row" style="top:416px"><span style="right:1580.5px">367</span><span style="left:81px">16207710</span><span style="left:235px">Blacha 12x90x90</span><span style="left:540px">OwT</span><span style="left:645px">2016243/1</span><span style="left:750px">WW160</span><span style="left:905px">L / O</span><span style="left:1010px">22</span><span style="right:420px">1,000</span><span style="right:295px">1,000</span><span style="left:1365px">KTO/06075/2017/1</span><span style="right:8.5px">24/05/2017</span></div>
<div class="row alt" style="top:440px"><span style="right:1580.5px">368</span><span style="left:81px">16207751</span><span style="left:235px">PTM8</span><span style="left:540px">OwT</span><span style="left:645px">2017096/1</span><span style="left:750px">WW160</span><span style="left:905px">O</span><span style="left:1010px">23</span><span style="right:420px">5,000</span><span style="right:295px">5,000</span><span style="left:1365px">KTO/02388/2017/1</span><span style="right:8.5px">27/03/2017</span></div>
<div class="row" style="top:464px"><span style="right:1580.5px">369</span><span style="left:81px">16207751</span><span style="left:235px">PTM8</span><span style="left:540px">OwT</span><span style="left:645px">2017168/1</span><span style="left:750px">WW160</span><span style="left:905px">O</span><span style="left:1010px">24</span><span style="right:420px">5,000</span><span style="right:295px">5,000</span><span style="left:1365px">KTO/02571/2017/1</span><span style="right:8.5px">27/03/2017</span></div>
<div class="row alt" style="top:488px"><span style="right:1580.5px">370</span><span style="left:81px">16207751</span><span style="left:235px">PTM8</span><span style="left:540px">OwT</span><span style="left:645px">2017169/1</span><span style="left:750px">WW160</span><span style="left:905px">O</span><span style="left:1010px">25</span><span style="right:420px">5,000</span><span style="right:295px">5,000</span><span style="left:1365px">KTO/02753/2017/1</span><span style="right:8.5px">27/03/2017</span></div>
<div class="row" style="top:512px"><span style="right:1580.5px">371</span><span style="left:81px">16207751</span><span style="left:235px">PTM8</span><span style="left:540px">OwT</span><span style="left:645px">2017170/1</span><span style="left:750px">WW160</span><span style="left:905px">O</span><span style="left:1010px">26</span><span style="right:420px">5,000</span><span style="right:295px">5,000</span><span style="left:1365px">KTO/02935/2017/1</span><span style="right:8.5px">27/03/2017</span></div>
<div class="row alt" style="top:536px"><span style="right:1580.5px">372</span><span style="left:81px">16207751</span><span style="left:235px">PTM8</span><span style="left:540px">OwT</span><span style="left:645px">2017171/1</span><span style="left:750px">WW160</span><span style="left:905px">O</span><span style="left:1010px">27</span><span style="right:420px">5,000</span><span style="right:295px">5,000</span><span style="left:1365px">KTO/03302/2017/1</span><span style="right:8.5px">27/03/2017</span></div>
<div class="row" style="top:560px"><span style="right:1580.5px">373</span><span style="left:81px">16207800</span><span style="left:235px">Wpust 8x7x28</span><span style="left:540px">OwT</span><span style="left:645px">2017096/1</span><span style="left:750px">WW160</span><span style="left:905px">O</span><span style="left:1010px">23</span><span style="right:420px">1,000</span><span style="right:295px">1,000</span><span style="left:1365px">KTO/02389/2017/1</span><span style="right:8.5px">27/03/2017</span></div>
<div class="row alt" style="top:584px"><span style="right:1580.5px">374</span><span style="left:81px">16207800</span><span style="left:235px">Wpust 8x7x28</span><span style="left:540px">OwT</span><span style="left:645px">2017168/1</span><span style="left:750px">WW160</span><span style="left:905px">O</span><span style="left:1010px">24</span><span style="right:420px">1,000</span><span style="right:295px">1,000</span><span style="left:1365px">KTO/02572/2017/1</span><span style="right:8.5px">27/03/2017</span></div>
<div class="row" style="top:608px"><span style="right:1580.5px">375</span><span style="left:81px">16207800</span><span style="left:235px">Wpust 8x7x28</span><span style="left:540px">OwT</span><span style="left:645px">2017169/1</span><span style="left:750px">WW160</span><span style="left:905px">O</span><span style="left:1010px">25</span><span style="right:420px">1,000</span><span style="right:295px">1,000</span><span style="left:1365px">KTO/02754/2017/1</span><span style="right:8.5px">27/03/2017</span></div>
<div class="row alt" style="top:632px"><span style="right:1580.5px">376</span><span style="left:81px">16207800</span><span style="left:235px">Wpust 8x7x28</span><span style="left:540px">OwT</span><span style="left:645px">2017170/1</span><span style="left:750px">WW160</span><span style="left:905px">O</span><span style="left:1010px">26</span><span style="right:420px">1,000</span><span style="right:295px">1,000</span><span style="left:1365px">KTO/02936/2017/1</span><span style="right:8.5px">27/03/2017</span></div>
<div class="row" style="top:656px"><span style="right:1580.5px">377</span><span style="left:81px">16207800</span><span style="left:235px">Wpust 8x7x28</span><span style="left:540px">OwT</span><span style="left:645px">2017171/1</span><span style="left:750px">WW160</span><span style="left:905px">O</span><span style="left:1010px">27</span><span style="right:420px">1,000</span><span style="right:295px">1,000</span><span style="left:1365px">KTO/03303/2017/1</span><span style="right:8.5px">27/03/2017</span></div>
<div class="row alt" style="top:680px"><span style="right:1580.5px">378</span><span style="left:81px">16207920</span><span style="left:235px">Tuleja osłony gardzieli 1 Pręt</span><span style="left:540px">OwT</span><span style="left:645px">2017096/1</span><span style="left:750px">WW160</span><span style="left:905px">T / O</span><span style="left:1010px">23</span><span style="right:420px">1,000</span><span style="right:295px">1,000</span><span style="left:1365px">KTO/02391/2017/1</span><span style="right:8.5px">27/03/2017</span></div>
<div class="row" style="top:704px"><span style="right:1580.5px">379</span><span style="left:81px">16207920</span><span style="left:235px">Tuleja osłony gardzieli 1 Pręt</span><span style="left:540px">OwT</span><span style="left:645px">2017168/1</span><span style="left:750px">WW160</span><span style="left:905px">T / O</span><span style="left:1010px">24</span><span style="right:420px">1,000</span><span style="right:295px">1,000</span><span style="left:1365px">KTO/02574/2017/1</span><span style="right:8.5px">27/03/2017</span></div>
<div class="row alt" style="top:728px"><span style="right:1580.5px">380</span><span style="left:81px">16207920</span><span style="left:235px">Tuleja osłony gardzieli 1 Pręt</span><span style="left:540px">OwT</span><span style="left:645px">2017169/1</span><span style="left:750px">WW160</span><span style="left:905px">T / O</span><span style="left:1010px">25</span><span style="right:420px">1,000</span><span style="right:295px">1,000</span><span style="left:1365px">KTO/02756/2017/1</span><span style="right:8.5px">27/03/2017</span></div>
<!-- h scrollbar -->
<div class="a" style="left:253px;top:752px;width:1650px;height:17px;background:#efefef"></div>
<div class="a" style="left:270px;top:753px;width:1592px;height:15px;background:#cacaca"></div>
<svg class="i" style="left:253px;top:752px" width="17" height="17"><path d="M10.5 4.5 L6.5 8.5 L10.5 12.5" fill="none" stroke="#555" stroke-width="2"/></svg>
<svg class="i" style="left:1886px;top:752px" width="17" height="17"><path d="M6 4.5 L10 8.5 L6 12.5" fill="none" stroke="#555" stroke-width="2"/></svg>
<!-- v scrollbar -->
<div class="a" style="left:1904px;top:93px;width:16px;height:947px;background:#efefef"></div>
<div class="a" style="left:1904px;top:110px;width:15px;height:591px;background:#c9c9c9"></div>
<svg class="i" style="left:1904px;top:93px" width="16" height="17"><path d="M4.5 10.5 L8 7 L11.5 10.5" fill="none" stroke="#444" stroke-width="1.8"/></svg>
<svg class="i" style="left:1904px;top:1023px" width="16" height="17"><path d="M4.5 6.5 L8 10 L11.5 6.5" fill="none" stroke="#444" stroke-width="1.8"/></svg>
</body></html>
